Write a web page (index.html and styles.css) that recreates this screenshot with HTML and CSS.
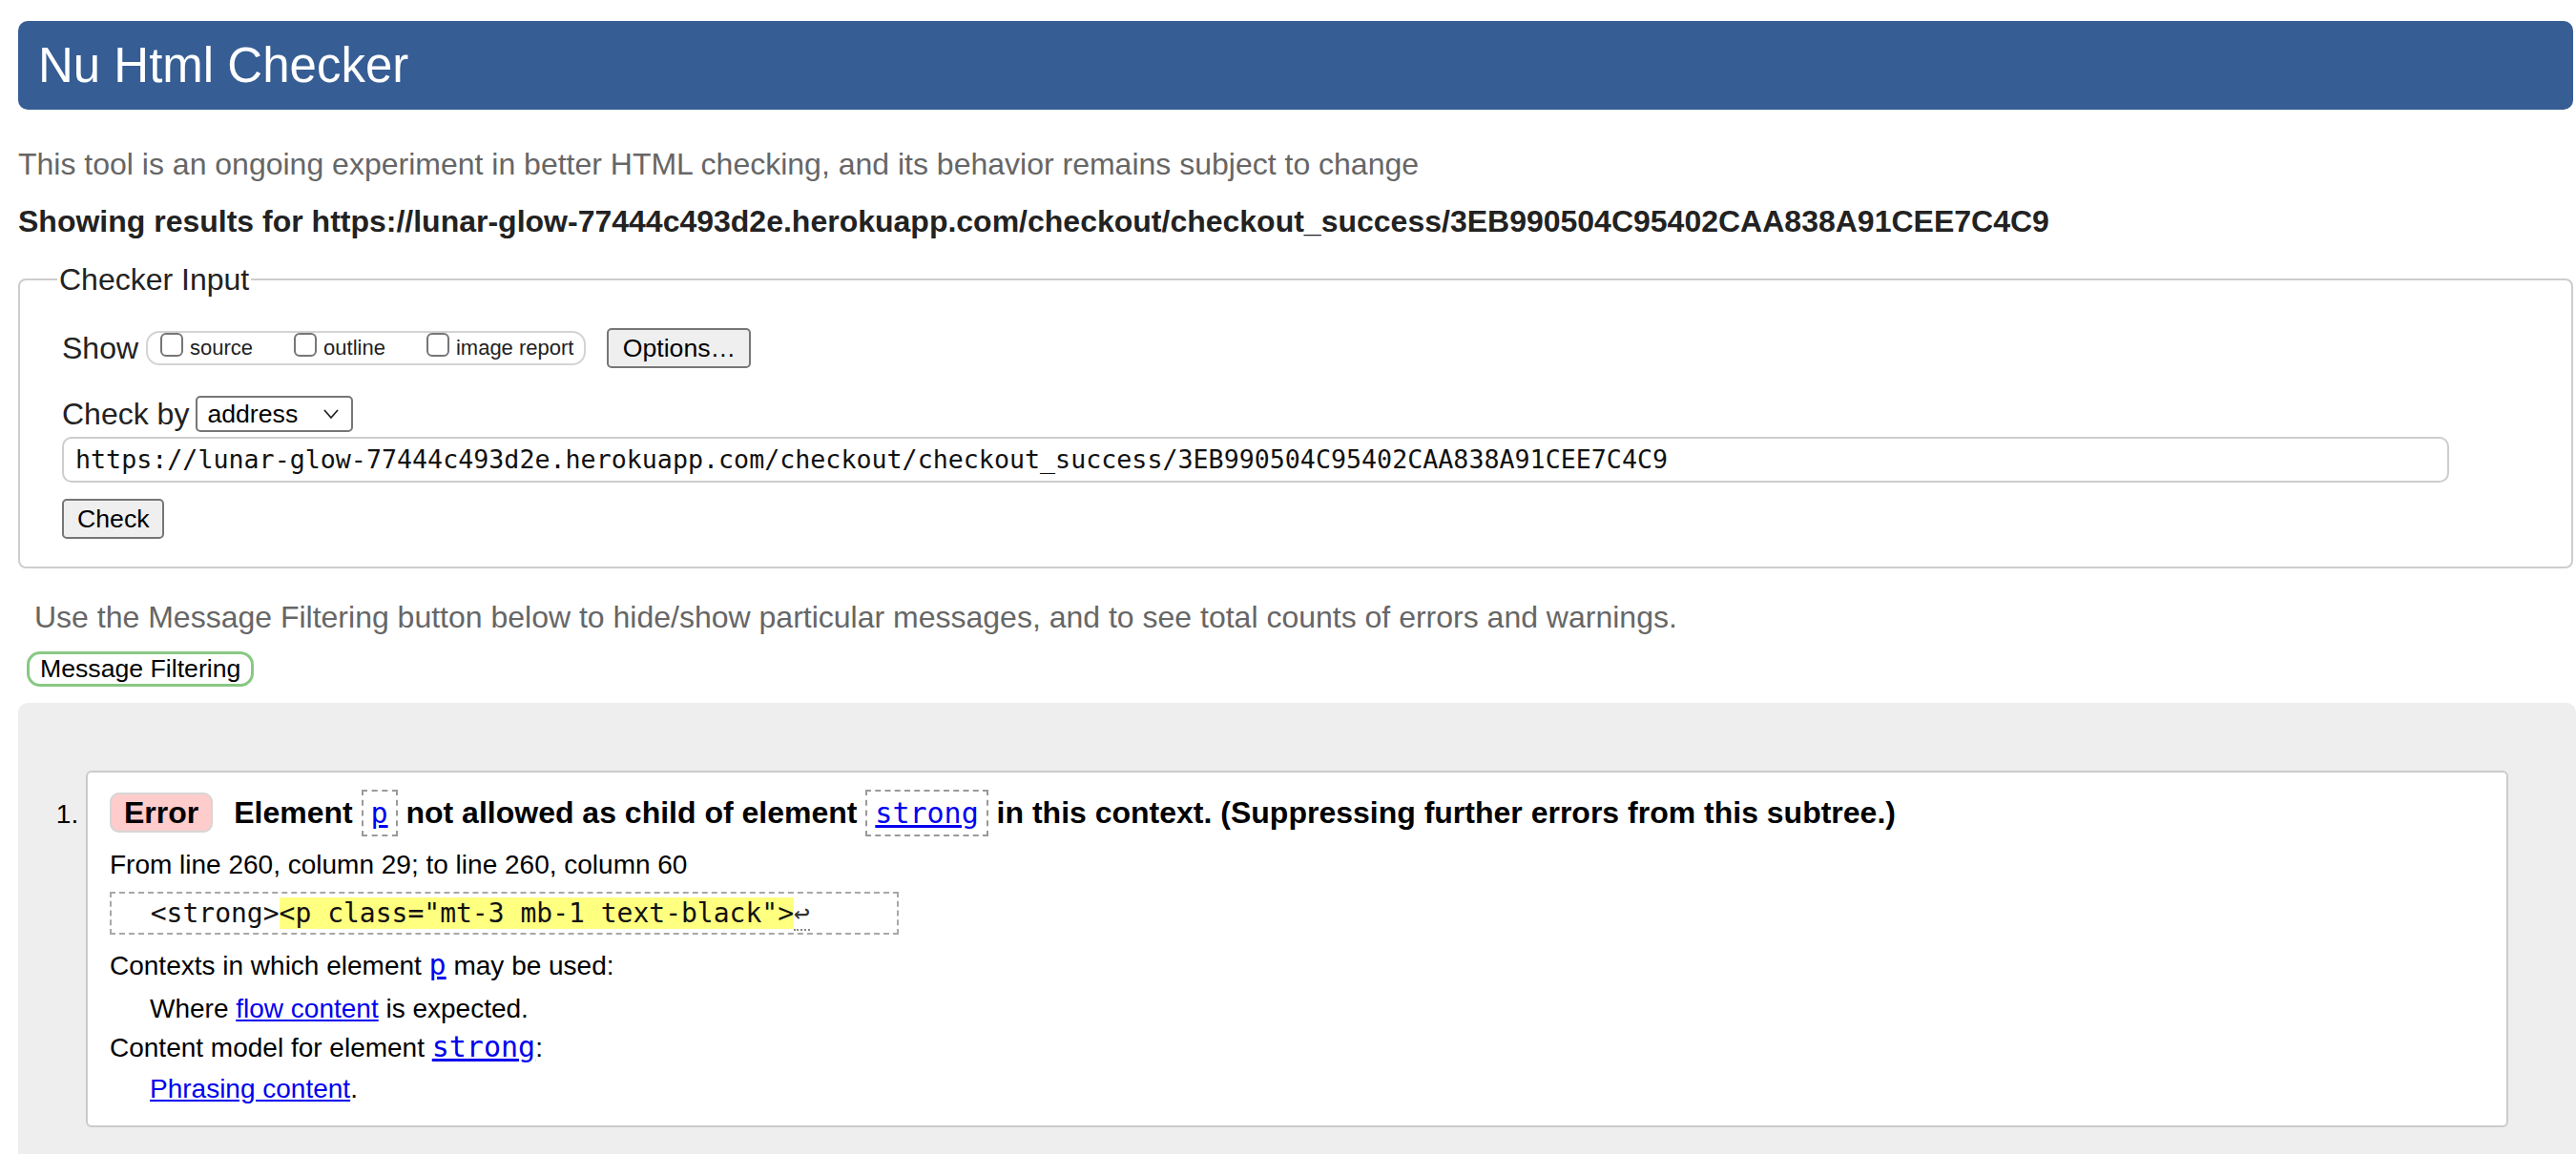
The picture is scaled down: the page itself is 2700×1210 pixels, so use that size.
FILE: index.html
```html
<!DOCTYPE html>
<html lang="en">
<head>
<meta charset="utf-8">
<title>Showing results for https://lunar-glow-77444c493d2e.herokuapp.com/checkout/checkout_success/3EB990504C95402CAA838A91CEE7C4C9 - Nu Html Checker</title>
<link rel="stylesheet" href="styles.css">
</head>
<body>
<div class="page">
  <h1 class="masthead">Nu Html Checker</h1>
  <p class="intro">This tool is an ongoing experiment in better HTML checking, and its behavior remains subject to change</p>
  <p class="results-for">Showing results for https://lunar-glow-77444c493d2e.herokuapp.com/checkout/checkout_success/3EB990504C95402CAA838A91CEE7C4C9</p>

  <fieldset class="checker">
    <legend class="checker-legend">Checker Input</legend>
    <div class="row show-row">
      <span class="row-label">Show</span>
      <span class="show-group">
        <label class="opt"><input type="checkbox" class="cb"><span class="opt-text">source</span></label>
        <label class="opt"><input type="checkbox" class="cb"><span class="opt-text">outline</span></label>
        <label class="opt"><input type="checkbox" class="cb"><span class="opt-text">image report</span></label>
      </span>
      <button class="btn btn-options" type="button">Options…</button>
    </div>
    <div class="row checkby-row">
      <span class="row-label">Check by</span>
      <span class="select">
        <span class="select-text">address</span>
        <svg class="chevron" width="18" height="12" viewBox="0 0 18 12"><polyline points="2,2 9,10 16,2" fill="none" stroke="#222" stroke-width="1.8"/></svg>
      </span>
    </div>
    <div class="url-input">https://lunar-glow-77444c493d2e.herokuapp.com/checkout/checkout_success/3EB990504C95402CAA838A91CEE7C4C9</div>
    <button class="btn btn-check" type="button">Check</button>
  </fieldset>

  <p class="filter-hint">Use the Message Filtering button below to hide/show particular messages, and to see total counts of errors and warnings.</p>
  <button class="filter-btn" type="button">Message Filtering</button>

  <div class="results">
    <ol class="messages">
      <li class="msg">
        <p class="msg-title"><strong class="badge">Error</strong> <span class="msg-text">Element <code class="boxed"><a href="#">p</a></code> not allowed as child of element <code class="boxed"><a href="#">strong</a></code> in this context. (Suppressing further errors from this subtree.)</span></p>
        <p class="location">From line 260, column 29; to line 260, column 60</p>
        <p class="extract-wrap"><code class="extract">  &lt;strong&gt;<span class="hl">&lt;p class="mt-3 mb-1 text-black"&gt;</span><span class="lf">↩</span>     </code></p>
        <p class="dt">Contexts in which element <a href="#" class="mono">p</a> may be used:</p>
        <p class="dd dd-1">Where <a href="#">flow content</a> is expected.</p>
        <p class="dt dt-2">Content model for element <a href="#" class="mono">strong</a>:</p>
        <p class="dd dd-2"><a href="#">Phrasing content</a>.</p>
      </li>
    </ol>
  </div>
</div>
</body>
</html>
```

FILE: styles.css
```css
html, body {
  margin: 0;
  padding: 0;
  background: #fff;
}

body {
  font-family: "Liberation Sans", Arial, Helvetica, sans-serif;
  color: #222;
  font-size: 32px;
}

.page {
  margin: 0 3px 0 19px;
  padding-top: 22px;
}

.masthead {
  margin: 0;
  height: 93px;
  line-height: 93px;
  padding: 0 21px;
  background: #365d94;
  color: #fff;
  font-size: 51px;
  font-weight: normal;
  border-radius: 10px;
}

.intro {
  margin: 38px 0 0;
  line-height: 38px;
  color: #666;
  font-size: 32px;
}

.results-for {
  margin: 22px 0 0;
  line-height: 38px;
  font-weight: bold;
  color: #222;
  font-size: 32px;
}

/* Checker input fieldset */
.checker {
  margin: 23px 0 0;
  padding: 32px 0 29px 44px;
  border: 2px solid #cdcdcd;
  border-radius: 8px;
  min-width: 0;
}

.checker-legend {
  padding: 0 2px;
  margin-left: -5px;
  font-size: 32px;
  line-height: 38px;
  color: #222;
}

.row {
  display: flex;
  align-items: center;
}

.row-label {
  font-size: 32px;
  line-height: 38px;
  color: #222;
}

.show-row {
  height: 42px;
}

.show-group {
  display: inline-flex;
  align-items: flex-start;
  height: 32px;
  margin-left: 8px;
  padding: 0 11px 0 13px;
  border: 2px solid #d4d4d4;
  border-radius: 14px;
}

.opt {
  display: inline-flex;
  align-items: flex-start;
  margin-right: 43px;
}

.opt:last-child {
  margin-right: 0;
}

.cb {
  -webkit-appearance: none;
  appearance: none;
  width: 24px;
  height: 25px;
  margin: 0 7px 0 0;
  border: 2px solid #767676;
  border-radius: 6px;
  background: #fff;
}

.opt-text {
  font-size: 22px;
  line-height: 32px;
  color: #222;
}

.btn {
  font-family: "Liberation Sans", Arial, Helvetica, sans-serif;
  font-size: 26.67px;
  color: #000;
  background: #efefef;
  border: 2px solid #767676;
  border-radius: 5px;
  height: 42px;
  padding: 0 14px;
  margin: 0;
}

.btn-options {
  margin-left: 22px;
  width: 151px;
}

.checkby-row {
  margin-top: 29px;
  height: 38px;
}

.select {
  display: inline-flex;
  align-items: center;
  justify-content: space-between;
  box-sizing: border-box;
  width: 165px;
  height: 38px;
  margin-left: 7px;
  padding: 0 12px 0 10px;
  border: 2px solid #767676;
  border-radius: 5px;
  background: #fff;
}

.select-text {
  font-size: 26.67px;
  color: #000;
}

.chevron {
  display: block;
}

.url-input {
  box-sizing: border-box;
  width: 2502px;
  height: 48px;
  margin-top: 5px;
  padding: 0 12px;
  border: 2px solid #cdcdcd;
  border-radius: 10px;
  font-family: "DejaVu Sans Mono", Menlo, monospace;
  font-size: 26.67px;
  line-height: 44px;
  color: #111;
  white-space: nowrap;
}

.btn-check {
  display: block;
  margin-top: 17px;
  width: 107px;
}

/* filtering */
.filter-hint {
  margin: 32px 0 0;
  padding-left: 17px;
  line-height: 38px;
  color: #666;
  font-size: 32px;
}

.filter-btn {
  display: block;
  margin: 17px 0 0 9px;
  height: 37px;
  padding: 0 11px;
  font-family: "Liberation Sans", Arial, Helvetica, sans-serif;
  font-size: 26.67px;
  color: #000;
  background: #fff;
  border: 3px solid #88c884;
  border-radius: 14px;
}

/* results */
.results {
  margin: 17px -3px 0 0;
  padding: 71px 71px 80px;
  background: #eee;
  border-radius: 10px 10px 0 0;
}

.messages {
  margin: 0;
  padding: 0;
  list-style: decimal outside;
}

.msg {
  font-size: 28px;
  color: #000;
  background: #fff;
  border: 2px solid #cbcbcb;
  border-radius: 6px;
  padding: 17px 24px 22px 23px;
}

.msg p {
  margin: 0;
}

.msg a {
  color: #0000ee;
  text-decoration: underline;
}

.msg-title {
  font-size: 32px;
  line-height: 50px;
}

.badge {
  font-weight: bold;
  background: #ffcccc;
  border: 2px solid #d6d6d6;
  border-radius: 10px;
  padding: 1px 13px;
  margin-right: 13px;
}

.msg-text {
  font-weight: bold;
}

.boxed {
  font-family: "DejaVu Sans Mono", Menlo, monospace;
  font-size: 30px;
  font-weight: normal;
  border: 2px dashed #9a9a9a;
  padding: 5px 8px;
}

.location {
  margin-top: 13px !important;
  line-height: 32px;
}

.extract-wrap {
  margin-top: 12px !important;
  line-height: 45px;
}

.extract {
  display: inline-block;
  box-sizing: border-box;
  height: 45px;
  padding: 4px 7px;
  border: 2px dashed #a8a8a8;
  font-family: "DejaVu Sans Mono", Menlo, monospace;
  font-size: 28px;
  line-height: 33px;
  white-space: pre;
  color: #111;
}

.hl {
  background: #ffff80;
}

.lf {
  border-bottom: 2px dotted #888;
  color: #333;
}

.mono {
  font-family: "DejaVu Sans Mono", Menlo, monospace;
  font-size: 30px;
}

.dt {
  margin-top: 16px !important;
  line-height: 32px;
}

.dt-2 {
  margin-top: 8px !important;
}

.dd {
  padding-left: 42px;
  line-height: 32px;
}

.dd-1 {
  margin-top: 13px !important;
}

.dd-2 {
  margin-top: 11px !important;
}
```
